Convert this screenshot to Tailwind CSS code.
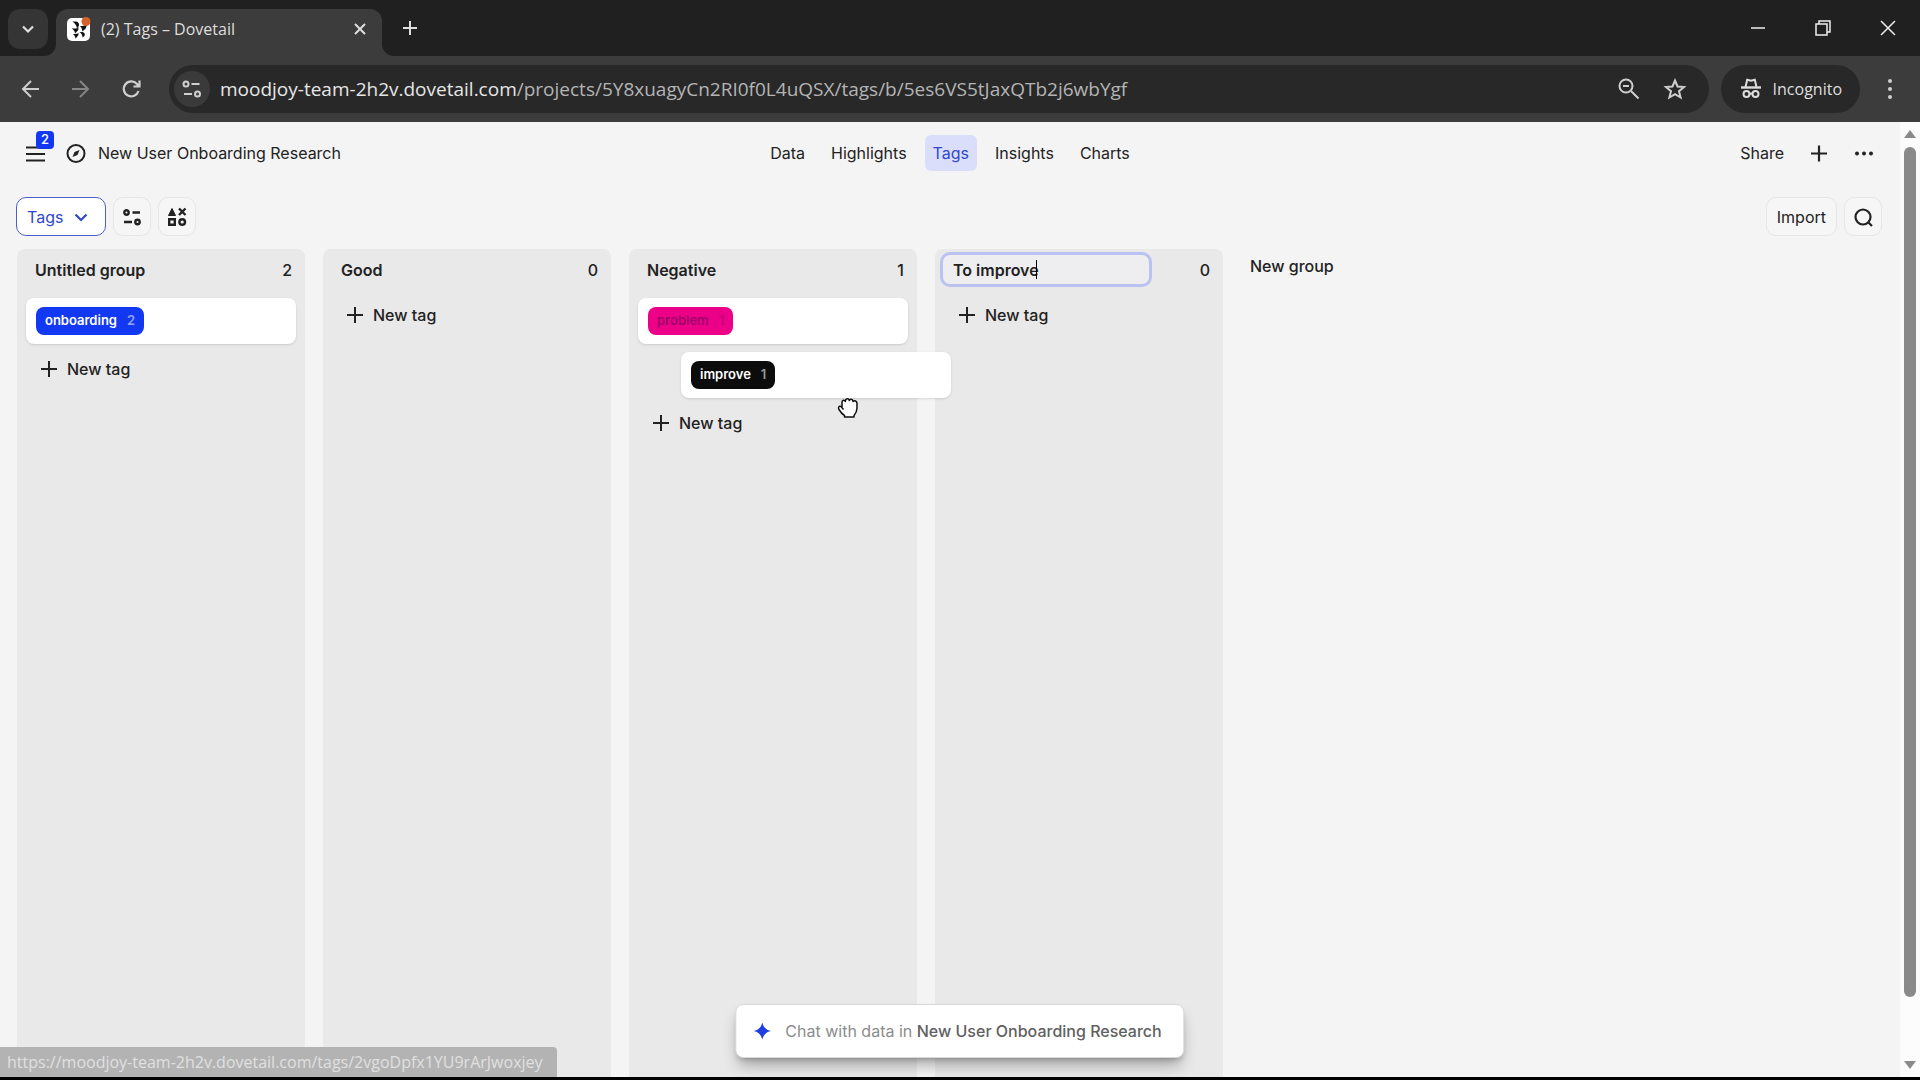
<!doctype html>
<html lang="en">
<head>
    <meta charset="UTF-8"/>
    <meta name="viewport" content="width=device-width, initial-scale=1.0"/>
    <title>(2) Tags – Dovetail</title>
    <script src="https://cdn.jsdelivr.net/npm/@tailwindcss/browser@4"></script>
</head>
<body class="h-screen flex flex-col overflow-hidden bg-black pb-[3px] font-['Inter','Liberation_Sans',sans-serif] text-[#222]">
<!-- Browser window -->
<div class="flex h-14 shrink-0 bg-[#202020] px-2 font-['Open_Sans','Noto_Sans',sans-serif] text-[#dedede]">
    <button aria-label="Search tabs" class="mt-[9px] flex size-10 items-center justify-center rounded-xl bg-[#353535]">
        <svg class="size-4" viewBox="0 0 16 16" fill="none" stroke="currentColor" stroke-width="2.2"><path d="M3 5.5l5 5 5-5"/></svg>
    </button>
    <div class="relative mt-[9px] ml-2 flex w-[326px] items-center rounded-t-xl bg-[#3c3c3c] pr-3 pb-2 pl-[11px]">
        <svg class="absolute bottom-0 -left-3 size-3 text-[#3c3c3c]" viewBox="0 0 12 12" fill="currentColor"><path d="M12 0v12H0A12 12 0 0 0 12 0z"/></svg>
        <svg class="absolute -right-3 bottom-0 size-3 text-[#3c3c3c]" viewBox="0 0 12 12" fill="currentColor"><path d="M0 0v12h12A12 12 0 0 1 0 0z"/></svg>
        <svg class="size-6" viewBox="0 0 24 24">
            <rect y="1" width="23" height="23" rx="5" fill="#fff"/>
            <g fill="#111">
                <path d="M5.500 4.500H9a3.200 3.200 0 0 1 2.500 5L10 11.500Q9.500 7.500 5.500 4.500z"/>
                <path d="M13 9h2.500q3 0 4-2 .5 4-2.500 6l-1.500 1.500Q15.500 11 13 9z"/>
                <path d="M4.500 11.500H8q3 0 3.500-1.500.5 3-2 5L8 16.500Q8 13.500 4.500 11.500z"/>
                <path d="M12.500 15H15a2.600 2.600 0 0 1 2 4.500l-1.500 1Q15.500 17 12.500 15z"/>
                <path d="M6 17h2q3 0 3.500-1.500.5 3-1.500 4.500L8.500 21.500Q8.500 19 6 17z"/>
            </g>
            <circle cx="19" cy="4.500" r="4.500" fill="#d4622a"/>
        </svg>
        <span class="ml-2.5 text-[16px]">(2) Tags – Dovetail</span>
        <button aria-label="Close tab" class="ml-auto">
            <svg class="size-5" viewBox="0 0 20 20" fill="none" stroke="currentColor" stroke-width="2"><path d="M5 5l10 10M15 5L5 15"/></svg>
        </button>
    </div>
    <button aria-label="New tab" class="ml-[18px] flex items-center">
        <svg class="size-5" viewBox="0 0 20 20" fill="none" stroke="currentColor" stroke-width="2"><path d="M10 3v14M3 10h14"/></svg>
    </button>
    <div class="ml-auto flex items-center gap-[45px] pr-3.5 text-[#eee]">
        <button aria-label="Minimize">
            <svg class="size-5" viewBox="0 0 20 20" fill="none" stroke="currentColor" stroke-width="1.500"><path d="M3 10h14"/></svg>
        </button>
        <button aria-label="Restore">
            <svg class="size-5" viewBox="0 0 20 20" fill="none" stroke="currentColor" stroke-width="1.500"><path d="M3 6h11v11H3zM6 6V3h11v11h-3"/></svg>
        </button>
        <button aria-label="Close">
            <svg class="size-5" viewBox="0 0 20 20" fill="none" stroke="currentColor" stroke-width="1.500"><path d="M3 3l14 14M17 3L3 17"/></svg>
        </button>
    </div>
</div>
<div class="flex h-[66px] shrink-0 items-center bg-[#3c3c3c] pr-5 pl-[21px] font-['Open_Sans','Noto_Sans',sans-serif] text-[#cfcfcf]">
    <div class="flex gap-[30px] pr-7">
        <button aria-label="Back">
            <svg class="size-5" viewBox="0 0 20 20" fill="none" stroke="currentColor" stroke-width="2"><path d="M18 10H2M10 2l-8 8 8 8"/></svg>
        </button>
        <button aria-label="Forward" class="text-[#858585]">
            <svg class="size-5" viewBox="0 0 20 20" fill="none" stroke="currentColor" stroke-width="2"><path d="M1 10h16M9 2l8 8-8 8"/></svg>
        </button>
        <button aria-label="Reload">
            <svg class="size-5" viewBox="0 0 20 20" fill="none" stroke="currentColor" stroke-width="2.200"><path d="M17.500 12A7.500 7.500 0 1 1 16 5l2 2.500M18.500 1.500v6h-6"/></svg>
        </button>
    </div>
    <div class="flex h-12 grow items-center rounded-full bg-[#282828] pr-[22px] pl-[5px]">
        <button aria-label="Site information" class="flex size-9 items-center justify-center rounded-full bg-[#3a3a3a]">
            <svg class="size-5" viewBox="0 0 20 20" fill="none" stroke="currentColor" stroke-width="2"><circle cx="4" cy="5" r="2.500"/><path d="M9.500 5h8M2 15h8"/><circle cx="15.500" cy="15" r="2.500"/></svg>
        </button>
        <p class="ml-2.5 text-[19px] whitespace-nowrap text-[#b4b4b4]"><span class="text-[#e6e6e6]">moodjoy-team-2h2v.dovetail.com</span>/projects/5Y8xuagyCn2RI0f0L4uQSX/tags/b/5es6VS5tJaxQTb2j6wbYgf</p>
        <div class="ml-auto flex gap-[22px]">
            <button aria-label="Zoom">
                <svg class="size-6" viewBox="0 0 24 24" fill="none" stroke="currentColor" stroke-width="2"><circle cx="9" cy="9" r="6.500"/><path d="M14 14l7.500 7.500M6 9h6"/></svg>
            </button>
            <button aria-label="Bookmark">
                <svg class="size-6" viewBox="0 0 24 24" fill="none" stroke="currentColor" stroke-width="2"><path d="M12 3.500l2.500 6 6.500.5-5 4.200 1.600 6.300-5.600-3.400-5.600 3.400L8 14.200 3 10l6.500-.5z"/></svg>
            </button>
        </div>
    </div>
    <button class="ml-3 flex h-12 items-center gap-2.5 rounded-full bg-[#282828] px-[18px] text-[16px] text-[#dedede]">
        <svg class="size-6" viewBox="0 0 24 24" fill="none" stroke="currentColor" stroke-width="2"><path d="M2 10.500h20" stroke-width="2.400"/><path d="M6.500 10l1.700-7.200 3.800 1 3.800-1L17.500 10"/><circle cx="7.500" cy="17" r="3"/><circle cx="16.500" cy="17" r="3"/><path d="M10.500 17q1.500-1 3 0"/></svg>
        Incognito
    </button>
    <button aria-label="Menu" class="ml-5">
        <svg class="size-5" viewBox="0 0 20 20" fill="currentColor"><circle cx="10" cy="2" r="2"/><circle cx="10" cy="10" r="2"/><circle cx="10" cy="18" r="2"/></svg>
    </button>
</div>

<!-- Page -->
<div class="relative flex min-h-0 grow bg-[#f4f4f4]">
    <div class="flex min-w-0 grow flex-col">
        <header class="grid h-[62px] shrink-0 grid-cols-[1fr_auto_1fr] items-center px-[26px] text-[16px]">
            <div class="flex items-center">
                <button aria-label="Open menu, 2 notifications" class="relative">
                    <svg class="size-5" viewBox="0 0 20 20" fill="none" stroke="currentColor" stroke-width="2.200"><path d="M0 4.500h19M0 11h19M0 17.500h19"/></svg>
                    <span class="absolute -top-3 left-2.5 flex size-[18px] items-center justify-center rounded bg-[#1238f2] text-[13px] font-medium text-white">2</span>
                </button>
                <svg class="ml-5 size-5" viewBox="0 0 20 20" fill="none" stroke="currentColor" stroke-width="2"><circle cx="10" cy="10.500" r="8.500"/><path d="M13.500 7l-2 5-5 2 2-5z" fill="currentColor" stroke="none"/></svg>
                <h1 class="ml-3 whitespace-nowrap">New User Onboarding Research</h1>
            </div>
            <nav class="flex gap-2.5">
                <a href="#" class="px-2 py-1.5">Data</a>
                <a href="#" class="px-2 py-1.5">Highlights</a>
                <a href="#" class="rounded-md bg-[#dadefb] px-2 py-1.5 text-[#2f49cf]">Tags</a>
                <a href="#" class="px-2 py-1.5">Insights</a>
                <a href="#" class="px-2 py-1.5">Charts</a>
            </nav>
            <div class="flex items-center justify-end gap-[25px]">
                <button>Share</button>
                <button aria-label="Add">
                    <svg class="size-5" viewBox="0 0 20 20" fill="none" stroke="currentColor" stroke-width="2.200"><path d="M10 2.500v16M2 10.500h16"/></svg>
                </button>
                <button aria-label="More">
                    <svg class="size-5" viewBox="0 0 20 20" fill="currentColor"><circle cx="3" cy="10.500" r="2"/><circle cx="10" cy="10.500" r="2"/><circle cx="17" cy="10.500" r="2"/></svg>
                </button>
            </div>
        </header>

        <div class="mt-[13px] flex shrink-0 gap-[7px] pr-[18px] pl-4 text-[16px]">
            <button class="flex h-[39px] items-center gap-2.5 rounded-[10px] border border-[#4a5fd0] bg-white pr-4 pl-2.5 text-[#2f49cf]">
                Tags
                <svg class="size-4" viewBox="0 0 16 16" fill="none" stroke="currentColor" stroke-width="2.200"><path d="M2.500 5.500L8 11l5.500-5.500"/></svg>
            </button>
            <button aria-label="Filter" class="flex h-[39px] w-[38px] items-center justify-center rounded-[10px] border border-[#e6e6e6] bg-[#f6f6f6]">
                <svg class="size-5" viewBox="0 0 20 20" fill="none" stroke="currentColor" stroke-width="2.400"><circle cx="4.500" cy="5.500" r="2.200"/><path d="M10.500 5.500H18M2 15h8"/><circle cx="15.500" cy="15" r="2.200"/></svg>
            </button>
            <button aria-label="Display" class="flex h-[39px] w-[38px] items-center justify-center rounded-[10px] border border-[#e6e6e6] bg-[#f6f6f6]">
                <svg class="size-5" viewBox="0 0 20 20" fill="none" stroke="currentColor" stroke-width="2.400"><path d="M5 1.500L8.500 8.500h-7z" fill="currentColor" stroke-width="1"/><path d="M12 1.500l6.500 6.500M18.500 1.500L12 8M2.200 12.200h5.600v5.600H2.200z"/><circle cx="15.200" cy="15" r="2.800"/></svg>
            </button>
            <button class="ml-auto h-[39px] rounded-[10px] border border-[#e6e6e6] bg-[#f6f6f6] px-2.5">Import</button>
            <button aria-label="Search" class="flex h-[39px] w-[38px] items-center justify-center rounded-[10px] border border-[#e6e6e6] bg-[#f6f6f6]">
                <svg class="size-5" viewBox="0 0 20 20" fill="none" stroke="currentColor" stroke-width="2.200"><circle cx="10" cy="10" r="7.500"/><path d="M15.500 15.500l3.500 3.500"/></svg>
            </button>
        </div>

        <!-- Board -->
        <main class="mt-[13px] flex min-h-0 grow gap-[18px] px-[17px] text-[16px] font-medium">
            <section class="w-72 shrink-0 rounded-t-lg bg-[#e9e9e9] px-[9px]">
                <div class="flex h-[49px] items-center justify-between pr-1 pb-2 pl-[9px]">
                    <h2 class="font-semibold">Untitled group</h2>
                    <span>2</span>
                </div>
                <div class="mb-2 flex h-[46px] items-center rounded-lg bg-white pl-2.5 shadow">
                    <a href="#" class="flex h-7 items-center gap-2.5 rounded-lg bg-[#1238f2] px-[9px] text-[13px] font-semibold text-white">onboarding <span class="text-[#93a4fa]">2</span></a>
                </div>
                <button class="flex h-[34px] items-center gap-[9px] px-3">
                    <svg class="size-5" viewBox="0 0 20 20" fill="none" stroke="currentColor" stroke-width="2"><path d="M11 2v16M3 10h16"/></svg>
                    New tag
                </button>
            </section>
            <section class="w-72 shrink-0 rounded-t-lg bg-[#e9e9e9] px-[9px]">
                <div class="flex h-[49px] items-center justify-between pr-1 pb-2 pl-[9px]">
                    <h2 class="font-semibold">Good</h2>
                    <span>0</span>
                </div>
                <button class="flex h-[34px] items-center gap-[9px] px-3">
                    <svg class="size-5" viewBox="0 0 20 20" fill="none" stroke="currentColor" stroke-width="2"><path d="M11 2v16M3 10h16"/></svg>
                    New tag
                </button>
            </section>
            <section class="w-72 shrink-0 rounded-t-lg bg-[#e9e9e9] px-[9px]">
                <div class="flex h-[49px] items-center justify-between pr-1 pb-2 pl-[9px]">
                    <h2 class="font-semibold">Negative</h2>
                    <span>1</span>
                </div>
                <div class="mb-2 flex h-[46px] items-center rounded-lg bg-white pl-2.5 shadow">
                    <a href="#" class="flex h-7 items-center gap-2.5 rounded-lg bg-[#ec0088] px-[9px] text-[13px] font-semibold text-[#a00068]">problem <span class="text-[#c40078]">1</span></a>
                </div>
                <!-- Card being dragged out of its slot -->
                <div class="relative mb-2 h-[46px]">
                    <div class="absolute top-0 left-[43px] z-10 flex h-[46px] w-full items-center rounded-lg bg-white pl-2.5 shadow">
                        <a href="#" class="flex h-7 items-center gap-2.5 rounded-lg bg-[#0c0c0c] px-[9px] text-[13px] font-semibold text-white">improve <span class="text-[#9a9a9a]">1</span></a>
                        <svg class="absolute top-[45px] left-[156px] h-[21px] w-[22px]" viewBox="0 0 22 21" fill="#fff" stroke="#111" stroke-width="1.500" stroke-linejoin="round"><path d="M5 10V5.500C5 3 7.500 2.500 8.300 4.500 8.500 1.200 11.500.8 12.300 3.500c1-2 3.500-1.500 3.700 1 1.500-1.500 4-.5 4 2V11c0 3-1 5-3 7.500V20H7.500v-1.500C5 17 3.500 15 2 12.500.8 10.500 2 8.500 4 9.500l2.500 3"/></svg>
                    </div>
                </div>
                <button class="flex h-[34px] items-center gap-[9px] px-3">
                    <svg class="size-5" viewBox="0 0 20 20" fill="none" stroke="currentColor" stroke-width="2"><path d="M11 2v16M3 10h16"/></svg>
                    New tag
                </button>
            </section>
            <section class="w-72 shrink-0 rounded-t-lg bg-[#e9e9e9] px-[9px]">
                <div class="flex h-[49px] items-center justify-between pr-1 pb-2">
                    <div class="relative -ml-1">
                        <input type="text" value="To improve" aria-label="Group name" class="block h-[35px] w-[212px] rounded-[10px] border-[3px] border-[#b9c2f1] bg-[#eeeef0] pl-2.5 font-semibold outline-none"/>
                        <span class="absolute top-2 left-24 h-[19px] w-px bg-black"></span>
                    </div>
                    <span>0</span>
                </div>
                <button class="flex h-[34px] items-center gap-[9px] px-3">
                    <svg class="size-5" viewBox="0 0 20 20" fill="none" stroke="currentColor" stroke-width="2"><path d="M11 2v16M3 10h16"/></svg>
                    New tag
                </button>
            </section>
            <button class="mt-[5px] ml-[9px] self-start">New group</button>
        </main>
    </div>

    <!-- Scrollbar -->
    <div class="flex w-5 shrink-0 flex-col items-center bg-[#fcfcfc] py-2 text-[#8a8a8a]">
        <svg class="h-2 w-3" viewBox="0 0 12 8" fill="currentColor"><path d="M6 0l6 8H0z"/></svg>
        <div class="mt-[9px] mb-16 w-3 grow rounded-full bg-current"></div>
        <svg class="h-2 w-3" viewBox="0 0 12 8" fill="currentColor"><path d="M0 0h12L6 8z"/></svg>
    </div>

    <button class="absolute bottom-[19px] left-1/2 z-20 flex h-[54px] -translate-x-1/2 items-center gap-[13px] rounded-lg border border-[#d8d8d8] bg-white pr-[22px] pl-4 text-[16px] whitespace-nowrap text-[#8c8c8c] shadow-lg shadow-black/30">
        <svg class="size-5 text-[#1f3fe0]" viewBox="0 0 20 20" fill="currentColor"><path d="M10 1.500q1.500 7 8.500 8.500-7 1.500-8.500 8.500Q8.500 11.500 1.500 10 8.500 8.500 10 1.500z"/></svg>
        <span>Chat with data in <b class="font-medium text-[#606060]">New User Onboarding Research</b></span>
    </button>
    <div class="absolute bottom-0 left-0 z-20 flex h-[30px] items-center rounded-tr bg-[#b3b3b3] pr-3.5 pl-[7px] font-['Open_Sans','Noto_Sans',sans-serif] text-[16px] whitespace-nowrap text-[#e0e0e0]">https://moodjoy-team-2h2v.dovetail.com/tags/2vgoDpfx1YU9rArJwoxjey</div>
</div>
</body>
</html>
